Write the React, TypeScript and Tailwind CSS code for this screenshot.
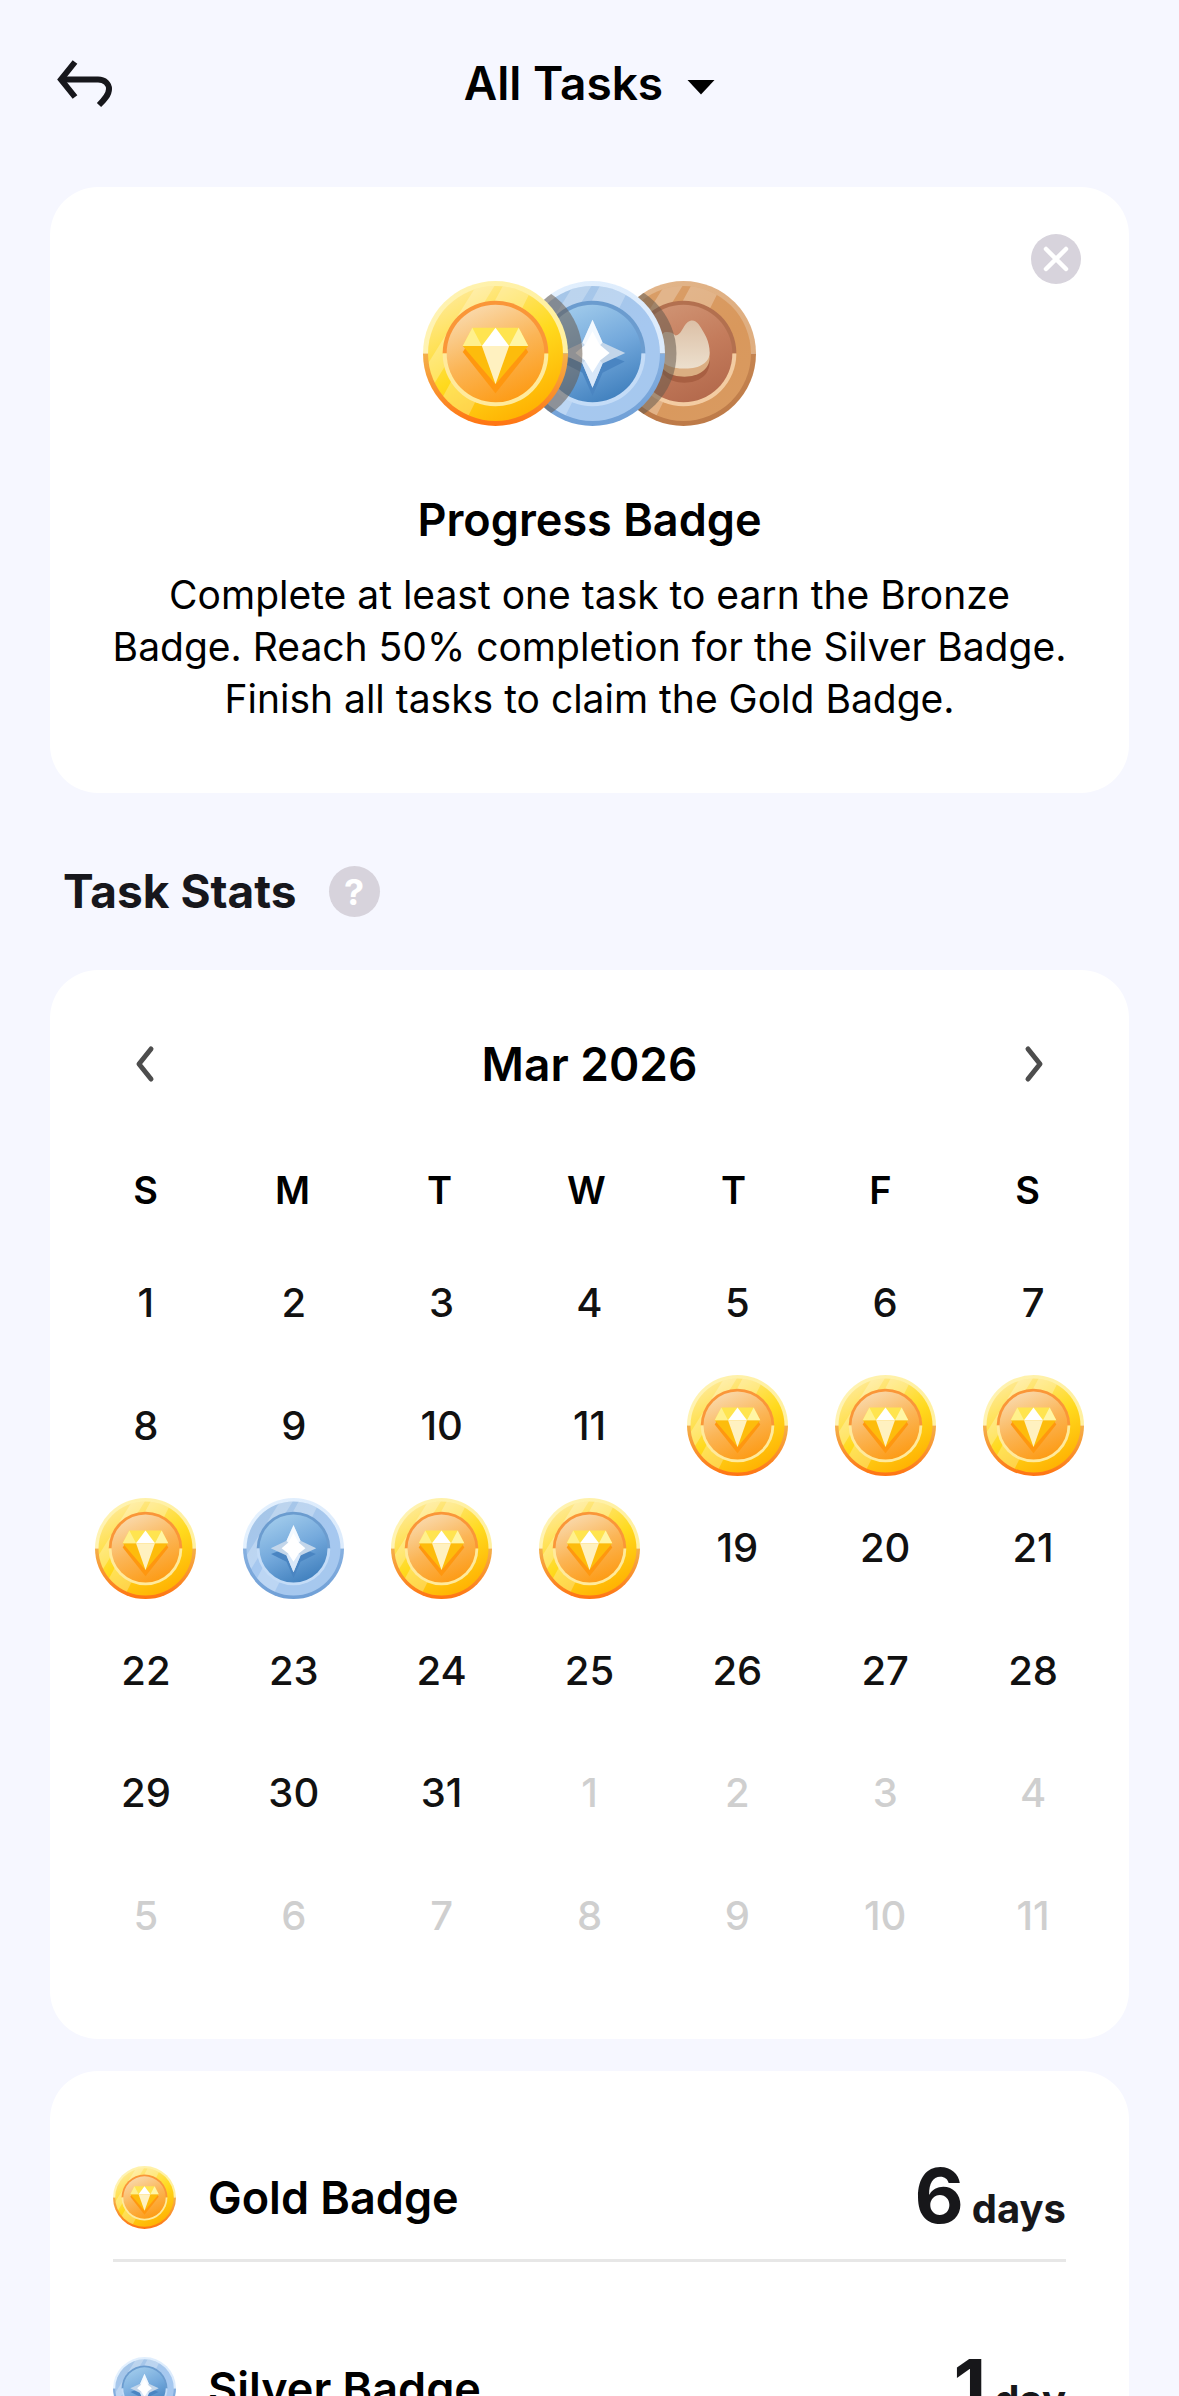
import { useId, useState } from 'react';
import clsx from 'clsx';

type BadgeKind = 'gold' | 'silver' | 'bronze';

interface CoinProps {
  kind: BadgeKind;
  className?: string;
  // dark crescent cast by the coin lying on the left
  shadowX?: number;
}

const palettes = {
  gold: {
    rimTop: ['#fff3b4', '#fff0a0'],
    rimBottom: ['#f4b04a', '#ff7412'],
    band: ['#ffe88a', '#ffda1e', '#ffb000'],
    ringTop: '#fa9638',
    ringBottom: '#ffea9c',
    disk: ['#f9dbb0', '#fbb556', '#fd9a12'],
  },
  silver: {
    rimTop: ['#e4f1fe', '#dcebfc'],
    rimBottom: ['#86b0e0', '#6f9fd6'],
    band: ['#a6c6e8', '#a6c8f0', '#a6c8ee'],
    ringTop: '#6b9ccf',
    ringBottom: '#c4dcf7',
    disk: ['#a2ccec', '#74a9dc', '#3f7fbd'],
  },
  bronze: {
    rimTop: ['#e3b88e', '#dfae80'],
    rimBottom: ['#c58450', '#bd7a48'],
    band: ['#d99d66', '#d9985c', '#d99a60'],
    ringTop: '#b3704f',
    ringBottom: '#f3cca2',
    disk: ['#d09474', '#c47c5c', '#b3694c'],
  },
};

const Gem = () => (
  <g>
    <path d="M39.5 70.5 L72 111.5 L104.5 70.5 L101 65 L43 65 Z" fill="#ff970f" />
    <path d="M39.5 64.5 L72 102.5 L104.5 64.5 Z" fill="#fdbc0c" />
    <path d="M49 46.5 H95 L104.5 64.5 H39.5 Z" fill="#ffe44f" />
    <path d="M49 46.5 L39.5 64.5 H58.5 Z" fill="#fff08c" />
    <path d="M95 46.5 L104.5 64.5 H85.5 Z" fill="#fff5a6" />
    <path d="M72 46.5 L58.5 64.5 H85.5 Z" fill="#ffffff" />
    <path d="M58.5 64.5 H85.5 L72 102.5 Z" fill="#fff1c0" />
  </g>
);

const Star = () => (
  <g>
    <path d="M72 48 L81 71 L104 80 L82 91 L72 114 L62 91 L40 80 L63 71 Z" fill="#4a85c2" />
    <path d="M72 38.5 L82 61 L104.5 71.5 L82 82 L72 106 L62 82 L39.5 71.5 L62 61 Z" fill="#c3d6ea" />
    <path d="M72 38.5 L82 61 L72 71.5 L62 61 Z" fill="#f3f9ff" />
    <path d="M62 82 L72 71.5 L82 82 L72 106 Z" fill="#d9e8f9" />
    <path d="M72 50 L79 63 L89 71.5 L79.5 79 L72 91 L64.5 79 L55 71.5 L65 63 Z" fill="#ffffff" />
  </g>
);

const Flame = ({ id }: { id: string }) => (
  <g>
    <path
      d="M80 44 C88 50 98 63 98 80 C98 94 87 101 73 101 C57 101 47 92 47 78 C47 66 51 60 55 56 C58 58 63 62 65 64 C70 58 74 47 80 44 Z"
      fill="#a85f42"
    />
    <path
      d="M80 42 C88 48 98 60 98 76 C98 88 87 95 73 95 C58 95 47 88 47 74 C47 62 51 56 55 52 C58 54 63 58 65 60 C70 54 74 44 80 42 Z"
      fill="#dbae82"
    />
    <path
      d="M76 41 C80 38 84 39 87 43 C93 52 98 60 98 71 C98 81 88 87 74 87 C58 87 47 82 47 68 C47 60 49 54 53 51 C57 50 61 51 64 54 C70 54 71 45 76 41 Z"
      fill={`url(#${id}-flame)`}
    />
  </g>
);

const Coin = ({ kind, className, shadowX }: CoinProps) => {
  const id = useId();
  const p = palettes[kind];

  return (
    <svg viewBox="0 0 144 144" className={className} role="img" aria-label={`${kind} badge`}>
      <defs>
        <linearGradient id={`${id}-band`} x1="0.2" y1="0.1" x2="0.7" y2="1">
          <stop offset="0" stopColor={p.band[0]} />
          <stop offset="0.5" stopColor={p.band[1]} />
          <stop offset="1" stopColor={p.band[2]} />
        </linearGradient>
        <linearGradient id={`${id}-top`}>
          <stop offset="0" stopColor={p.rimTop[0]} />
          <stop offset="1" stopColor={p.rimTop[1]} />
        </linearGradient>
        <linearGradient id={`${id}-bottom`} x1="0" y1="0" x2="0" y2="1">
          <stop offset="0" stopColor={p.rimBottom[0]} />
          <stop offset="1" stopColor={p.rimBottom[1]} />
        </linearGradient>
        <linearGradient id={`${id}-disk`} x1="0.25" y1="0" x2="0.7" y2="1">
          <stop offset="0" stopColor={p.disk[0]} />
          <stop offset="0.5" stopColor={p.disk[1]} />
          <stop offset="1" stopColor={p.disk[2]} />
        </linearGradient>
        <linearGradient id={`${id}-flame`} x1="0" y1="0" x2="0" y2="1">
          <stop offset="0" stopColor="#dcc0a6" />
          <stop offset="1" stopColor="#ecdfcd" />
        </linearGradient>
        <clipPath id={`${id}-coin`}>
          <circle cx="72" cy="72" r="72" />
        </clipPath>
        <clipPath id={`${id}-face`}>
          <circle cx="72" cy="72" r="67" />
        </clipPath>
      </defs>

      {/* Rim */}
      <path d="M0 72 A72 72 0 0 1 144 72 Z" fill={`url(#${id}-top)`} />
      <path d="M0 72 A72 72 0 0 0 144 72 Z" fill={`url(#${id}-bottom)`} />
      <circle cx="72" cy="72" r="67" fill={`url(#${id}-band)`} />

      {/* Shine across the band */}
      <g clipPath={`url(#${id}-face)`} fill="#ffffff" fillOpacity="0.25">
        <path d="M56 0 L74 0 L0 120 L0 90 Z" />
        <path d="M82 0 L112 0 L40 144 L4 144 Z" />
      </g>

      {/* Inner ring and disk */}
      <path d="M19.5 72 A52.5 52.5 0 0 1 124.5 72 Z" fill={p.ringTop} />
      <path d="M19.5 72 A52.5 52.5 0 0 0 124.5 72 Z" fill={p.ringBottom} />
      <circle cx="72" cy="72" r="48.5" fill={`url(#${id}-disk)`} />

      {kind === 'gold' && <Gem />}
      {kind === 'silver' && <Star />}
      {kind === 'bronze' && <Flame id={id} />}

      {shadowX !== undefined && (
        <circle cx={shadowX} cy="72" r="72" fill="#66594c" fillOpacity="0.55" clipPath={`url(#${id}-coin)`} />
      )}
    </svg>
  );
};

const weekdays = ['S', 'M', 'T', 'W', 'T', 'F', 'S'];

const earned: Record<number, BadgeKind> = {
  12: 'gold',
  13: 'gold',
  14: 'gold',
  15: 'gold',
  16: 'silver',
  17: 'gold',
  18: 'gold',
};

// March 2026 starts on a Sunday, the grid always holds six weeks
const DAYS_IN_MONTH = 31;
const weeks = Array.from({ length: 6 }, (_, w) => Array.from({ length: 7 }, (_, d) => w * 7 + d + 1));

const totals: { kind: BadgeKind; label: string; count: number }[] = [
  { kind: 'gold', label: 'Gold Badge', count: 6 },
  { kind: 'silver', label: 'Silver Badge', count: 1 },
];

const Chevron = ({ flip }: { flip?: boolean }) => (
  <svg viewBox="0 0 20 38" className={clsx('h-[38px] w-5', flip && 'rotate-180')} fill="none">
    <path d="M16 4 L4 19 L16 34" stroke="#4d4d4d" strokeWidth="5" strokeLinecap="round" strokeLinejoin="round" />
  </svg>
);

export default function App() {
  const [showIntro, setShowIntro] = useState(true);

  return (
    <div className="h-screen overflow-hidden bg-[#f6f7ff] px-[50px] font-['Inter',sans-serif] text-black">
      {/* Header */}
      <header className="grid h-[187px] grid-cols-[80px_1fr_80px] items-start pt-[54px]">
        <button aria-label="Back" className="flex h-[58px] items-center pl-1">
          <svg viewBox="0 0 60 52" className="h-[52px] w-[60px]" fill="none" stroke="#17171c" strokeWidth="6">
            <path d="M21 5 L7 22.5 L21 40" />
            <path d="M8 22.5 H44 C51 22.5 55 27 55 32 C55 38 50 43 45 48" />
          </svg>
        </button>
        <button className="flex h-[58px] items-center justify-center gap-6 text-[46px] font-semibold">
          All Tasks
          <svg viewBox="0 0 28 15" className="mt-2 h-[15px] w-7">
            <path d="M0.5 0 H27.5 L14 14.5 Z" fill="#000000" />
          </svg>
        </button>
      </header>

      {/* Intro card */}
      {showIntro && (
        <section className="relative flex h-[606px] flex-col items-center rounded-[48px] bg-white pt-[94px]">
          <button
            aria-label="Close"
            onClick={() => setShowIntro(false)}
            className="absolute top-[47px] right-[48px] flex size-[50px] items-center justify-center rounded-full bg-[#d7d3dc]"
          >
            <svg viewBox="0 0 26 26" className="size-[26px]" stroke="#ffffff" strokeWidth="4.5" strokeLinecap="round">
              <path d="M3 3 L23 23 M23 3 L3 23" />
            </svg>
          </button>
          <div className="flex">
            <Coin kind="gold" className="relative z-20 size-[145px]" />
            <Coin kind="silver" className="relative z-10 -ml-12 size-[145px]" shadowX={-10} />
            <Coin kind="bronze" className="-ml-[54px] size-[145px]" shadowX={-7} />
          </div>
          <h1 className="mt-[65px] text-[45px] leading-[58px] font-semibold">Progress Badge</h1>
          <p className="mt-5 px-14 text-center text-[39px] leading-[52px]">
            Complete at least one task to earn the Bronze Badge. Reach 50% completion for the Silver Badge. Finish all
            tasks to claim the Gold Badge.
          </p>
        </section>
      )}

      {/* Stats heading */}
      <div className="flex h-[177px] items-center gap-8 pt-5 pl-[13px]">
        <h2 className="text-[46px] font-bold text-[#17171c]">Task Stats</h2>
        <button
          aria-label="About task stats"
          className="flex size-[51px] items-center justify-center rounded-full bg-[#d7d3dc] text-[36px] font-bold text-white"
        >
          ?
        </button>
      </div>

      {/* Calendar */}
      <section className="rounded-[48px] bg-white px-[22px] pt-[64px] pb-[62px]">
        <div className="flex h-[60px] items-center justify-between px-[63px]">
          <button aria-label="Previous month">
            <Chevron />
          </button>
          <span className="text-[46px] font-semibold">Mar 2026</span>
          <button aria-label="Next month">
            <Chevron flip />
          </button>
        </div>
        <table className="block">
          <thead className="block">
            <tr className="grid h-[148px] grid-cols-7 items-center pt-[50px] pr-[6px] pb-[6px]">
              {weekdays.map((day, i) => (
                <th key={i} scope="col" className="text-center text-[38px] font-semibold">
                  {day}
                </th>
              ))}
            </tr>
          </thead>
          <tbody className="grid h-[735px] grid-rows-6">
            {weeks.map((week, w) => (
              <tr key={w} className="grid grid-cols-7">
                {week.map((day) => (
                  <td
                    key={day}
                    className={clsx(
                      'flex items-center justify-center text-[40px] font-medium',
                      day > DAYS_IN_MONTH ? 'text-[#cfcfcf]' : 'text-[#111111]',
                    )}
                  >
                    {earned[day] ? (
                      <Coin kind={earned[day]} className="size-[101px]" />
                    ) : day > DAYS_IN_MONTH ? (
                      day - DAYS_IN_MONTH
                    ) : (
                      day
                    )}
                  </td>
                ))}
              </tr>
            ))}
          </tbody>
        </table>
      </section>

      {/* Totals */}
      <section className="mt-8 rounded-[48px] bg-white px-[63px]">
        {totals.map((item) => (
          <div key={item.kind} className="flex h-[191px] items-end border-b-[3px] border-[#e7e7e7]">
            <div className="flex flex-1 items-center gap-8 pb-[30px]">
              <Coin kind={item.kind} className="size-[63px]" />
              <span className="text-[45px] leading-[63px] font-semibold">{item.label}</span>
            </div>
            <div className="flex items-baseline gap-2 pb-3 leading-[76px] font-bold text-[#17171a]">
              <span className="text-[76px]">{item.count}</span>
              <span className="text-[40px]">{item.count === 1 ? 'day' : 'days'}</span>
            </div>
          </div>
        ))}
      </section>
    </div>
  );
}
